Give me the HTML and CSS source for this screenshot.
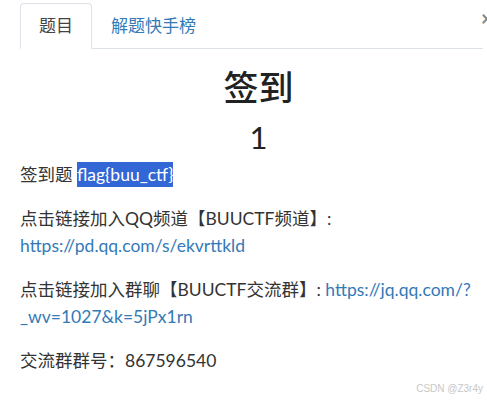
FILE: index.html
```html
<!DOCTYPE html>
<html lang="zh-CN">
<head>
  <meta charset="utf-8" />
  <meta name="viewport" content="width=device-width,initial-scale=1" />
  <title>签到</title>
  <link rel="stylesheet" href="styles.css">
</head>
<body>
  <div class="modal">
    <button class="close" aria-label="Close">×</button>

    <!-- tabs -->
    <ul class="tabs">
      <li class="tab active"><a href="#">题目</a></li>
      <li class="tab"><a href="#">解题快手榜</a></li>
    </ul>

    <!-- challenge -->
    <section class="challenge">
      <h1 class="challenge-name">签到</h1>
      <h2 class="challenge-value">1</h2>
      <div class="challenge-desc">
        <p>签到题 <span class="sel">flag{buu_ctf}</span></p>
        <p>点击链接加入QQ频道【BUUCTF频道】:<br><a href="#">https://pd.qq.com/s/ekvrttkld</a></p>
        <p>点击链接加入群聊【BUUCTF交流群】: <a href="#">https://jq.qq.com/?_wv=1027&amp;k=5jPx1rn</a></p>
        <p>交流群群号：867596540</p>
      </div>
    </section>
  </div>

  <div class="watermark">CSDN @Z3r4y</div>
</body>
</html>
```

FILE: styles.css
```css
/* reset */
*,*::before,*::after{box-sizing:border-box;}
html,body{margin:0;padding:0;overflow:hidden;}

:root{
  --c-text:#333;
  --c-link:#337ab7;
  --c-border:#dde2e8;
  --c-sel:#3367d6;
}

body{
  font-family:"Lato","Noto Sans CJK SC",sans-serif;
  font-size:17.5px;
  color:var(--c-text);
  background:#fff;
  width:487px;height:400px;
  position:relative;
}

.modal{width:477px;margin-left:20px;padding-top:3px;}

/* close button, clipped at the right edge */
.close{
  position:absolute;top:8px;left:481px;
  border:0;background:none;padding:0;
  font:700 20px/1 "Lato",sans-serif;color:#666;
  opacity:.8;
}

/* tabs */
.tabs{
  list-style:none;margin:0 14px 0 0;padding:0;
  display:flex;
  border-bottom:1px solid var(--c-border);
}
.tab{margin-bottom:-1px;}
.tab a{
  display:block;
  padding:10px 18px;
  line-height:24px;
  font-size:17px;
  text-decoration:none;
  color:var(--c-link);
  border:1px solid transparent;
  border-radius:4px 4px 0 0;
}
.tab.active a{
  color:#444;
  border-color:var(--c-border);
  border-bottom-color:#fff;
  background:#fff;
}

/* challenge body */
.challenge-name{
  margin:16px 0 0;
  text-align:center;
  font-size:35px;
  font-weight:500;
  line-height:44px;
  color:#222;
}
.challenge-value{
  margin:8px 0 0;
  text-align:center;
  font-size:31px;
  font-weight:400;
  line-height:40px;
  color:#222;
}

.challenge-desc{margin-top:4px;}
.challenge-desc p{margin:0 0 17px;line-height:27px;}
.challenge-desc a{color:var(--c-link);text-decoration:none;}
.sel{background:var(--c-sel);color:#fff;padding:2px 0;}

.watermark{
  position:absolute;right:4px;bottom:6px;
  font:10px/1 "Liberation Sans",sans-serif;
  color:#c8c8c8;
}
```
